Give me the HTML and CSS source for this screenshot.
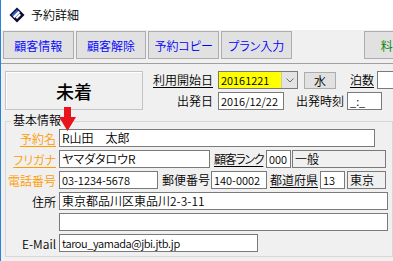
FILE: index.html
```html
<!DOCTYPE html>
<html lang="ja">
  <head>
    <meta charset="UTF-8" />
    <title>予約詳細</title>
    <link rel="stylesheet" href="styles.css">
  </head>

  <body>
    <div class="window">
      <div class="titlebar">
        <svg class="app-icon" viewBox="0 0 16 16">
          <polygon points="8,0.5 15.5,8 8,15.5 0.5,8" fill="#0c0c2e" />
          <polygon points="8,2.5 11,5.5 5.5,11 2.5,8" fill="#2f63d6" />
          <polygon points="9.5,4 11,5.5 5.5,11 4,9.5" fill="#ffffff" />
          <polygon points="10.5,6.5 12,8 8,12 6.5,10.5" fill="#ffffff" />
        </svg>
        <span class="title">予約詳細</span>
      </div>

      <div class="toolbar">
        <button class="tool">顧客情報</button>
        <button class="tool">顧客解除</button>
        <button class="tool">予約コピー</button>
        <button class="tool">プラン入力</button>
        <button class="tool tool-fee">料</button>
      </div>

      <div class="main">
        <div class="top-row">
          <div class="status">未着</div>

          <div class="dates">
            <div class="line">
              <span class="lbl lbl-date u">利用開始日</span>
              <div class="combo">
                <span class="combo-value num">20161221</span>
                <span class="combo-btn">
                  <svg viewBox="0 0 8 5" width="8" height="5">
                    <polyline points="0.5,0.5 4,4 7.5,0.5" fill="none" stroke="#6a6a6a" stroke-width="1" />
                  </svg>
                </span>
              </div>
              <button class="day">水</button>
              <span class="lbl u nights">泊数</span>
              <span class="box box-nights"></span>
            </div>
            <div class="line">
              <span class="lbl lbl-date">出発日</span>
              <span class="box num box-depdate">2016/12/22</span>
              <span class="lbl deptime">出発時刻</span>
              <span class="box num box-deptime">_:_</span>
            </div>
          </div>
        </div>

        <fieldset class="group">
          <legend>基本情報</legend>

          <div class="rows">
            <div class="row">
              <span class="row-label req u">予約名</span>
              <span class="box w-name">R山田　太郎</span>
            </div>
            <div class="row">
              <span class="row-label req u">フリガナ</span>
              <span class="box w-kana">ヤマダタロウR</span>
              <span class="lbl u l-rank">顧客ランク</span>
              <span class="box num w-rank">000</span>
              <span class="box ro w-rankname">一般</span>
            </div>
            <div class="row">
              <span class="row-label req">電話番号</span>
              <span class="box num w-tel">03-1234-5678</span>
              <span class="lbl l-zip">郵便番号</span>
              <span class="box num w-zip">140-0002</span>
              <span class="lbl u l-pref">都道府県</span>
              <span class="box num w-pref">13</span>
              <span class="box ro w-prefname">東京</span>
            </div>
            <div class="row">
              <span class="row-label">住所</span>
              <span class="box w-addr">東京都品川区東品川2-3-11</span>
            </div>
            <div class="row">
              <span class="row-label"></span>
              <span class="box w-addr"></span>
            </div>
            <div class="row">
              <span class="row-label">E-Mail</span>
              <span class="box num mail w-mail">tarou_yamada@jbi.jtb.jp</span>
            </div>
          </div>
        </fieldset>
      </div>

      <!-- red pointer over the name field -->
      <svg class="marker" viewBox="0 0 17 24">
        <path d="M5 0 H12 V10 H17 L8.5 24 L0 10 H5 Z" fill="#e8141c" />
      </svg>
    </div>
  </body>
</html>
```

FILE: styles.css
```css
* {
  box-sizing: border-box;
}

html,
body {
  margin: 0;
}

body {
  width: 393px;
  height: 261px;
  overflow: hidden;
  font-family: "Noto Sans CJK JP", sans-serif;
  font-size: 12px;
  font-weight: 350;
  font-feature-settings: "palt";
  color: #000;
  background-color: #f0f0f0;
}

button {
  font: inherit;
  padding: 0;
}

.window {
  position: relative;
  height: 261px;
  border-left: 1px solid #2b80d8;
}

.titlebar {
  height: 30px;
  background-color: #fff;
  display: flex;
  align-items: center;
  gap: 6px;
  padding-left: 8px;
}

.app-icon {
  width: 16px;
  height: 16px;
}

.title {
  line-height: 14px;
}

.toolbar {
  height: 34px;
  display: flex;
  gap: 2px;
  padding: 1px 0 0 2px;
  border-bottom: 1px solid #a0a0a0;
}

.tool {
  flex-shrink: 0;
  width: 70.67px;
  height: 28px;
  border: 1px solid #adadad;
  background-color: #e1e1e1;
  color: #0000ff;
}

.tool-fee {
  margin-left: 70px;
  color: #008000;
  text-align: left;
  padding-left: 16px;
}

.main {
  padding: 7px 0 0 4px;
}

.top-row {
  display: flex;
  height: 39px;
}

.status {
  flex-shrink: 0;
  width: 138px;
  height: 39px;
  border: 1px solid #c4c4c4;
  box-shadow: inset 1px 1px 0 #fff;
  display: flex;
  justify-content: center;
  align-items: center;
  font-size: 18px;
  font-weight: 500;
}

.dates {
  flex-shrink: 0;
  display: flex;
  flex-direction: column;
  gap: 3px;
}

.line {
  display: flex;
  align-items: flex-start;
  height: 18px;
}

.lbl {
  flex-shrink: 0;
  white-space: nowrap;
  line-height: 18px;
}

.u {
  text-decoration: underline;
  text-underline-offset: 2px;
}

.lbl-date {
  width: 70px;
  margin-right: 5px;
  text-align: right;
}

.combo {
  flex-shrink: 0;
  display: flex;
  width: 80px;
  height: 18px;
  border: 1px solid #7a7a7a;
  background-color: #ffff00;
}

.combo-value {
  flex: 1;
  padding-left: 2px;
  line-height: 16px;
}

.combo-btn {
  width: 16px;
  display: flex;
  justify-content: center;
  align-items: center;
  background-color: #e3e3e3;
  border-left: 1px solid #c8c8c8;
}

.day {
  flex-shrink: 0;
  margin: 1px 0 0 6px;
  width: 32px;
  height: 17px;
  border: 1px solid #adadad;
  background-color: #e1e1e1;
  line-height: 15px;
}

.nights {
  margin-left: 14px;
}

.box {
  flex-shrink: 0;
  height: 18px;
  border: 1px solid #7a7a7a;
  background-color: #fff;
  padding: 0 2px;
  line-height: 16px;
  white-space: nowrap;
  overflow: hidden;
}

.num {
  font-size: 11px;
}

.mail {
  letter-spacing: -0.4px;
}

.box-nights {
  width: 30px;
  margin-left: 3px;
}

.box-depdate {
  width: 66px;
}

.deptime {
  margin-left: 12px;
}

.box-deptime {
  width: 35px;
  margin-left: 3px;
}

.group {
  margin: 3px 0 0 0;
  padding: 0 0 4px 0;
  min-width: 0;
  border: 1px solid #d8d8d8;
}

.group legend {
  margin-left: 5px;
  padding: 0 2px 2px;
  line-height: 14px;
}

.rows {
  display: flex;
  flex-direction: column;
  gap: 3px;
}

.row {
  display: flex;
  align-items: center;
  height: 18px;
}

.row-label {
  flex-shrink: 0;
  width: 50px;
  margin-right: 3px;
  text-align: right;
  white-space: nowrap;
}

.req {
  color: #ff9c00;
}

.ro {
  background-color: #f0f0f0;
}

.w-name {
  width: 316px;
}

.w-kana {
  width: 151px;
}

.l-rank {
  width: 51px;
  margin-left: 4px;
  letter-spacing: -1.3px;
}

.w-rank {
  width: 25px;
  margin-left: 1px;
}

.w-rankname {
  width: 94px;
  margin-left: 1px;
}

.w-tel {
  width: 99px;
}

.l-zip {
  width: 47px;
  margin-left: 4px;
}

.w-zip {
  width: 56px;
  margin-left: 2px;
}

.l-pref {
  width: 49px;
  margin-left: 3px;
}

.w-pref {
  width: 25px;
  margin-left: 1px;
}

.w-prefname {
  width: 39px;
  margin-left: 2px;
}

.w-addr {
  width: 329px;
}

.w-mail {
  width: 199px;
}

.marker {
  position: absolute;
  left: 58px;
  top: 107px;
  width: 17px;
  height: 24px;
}
```
